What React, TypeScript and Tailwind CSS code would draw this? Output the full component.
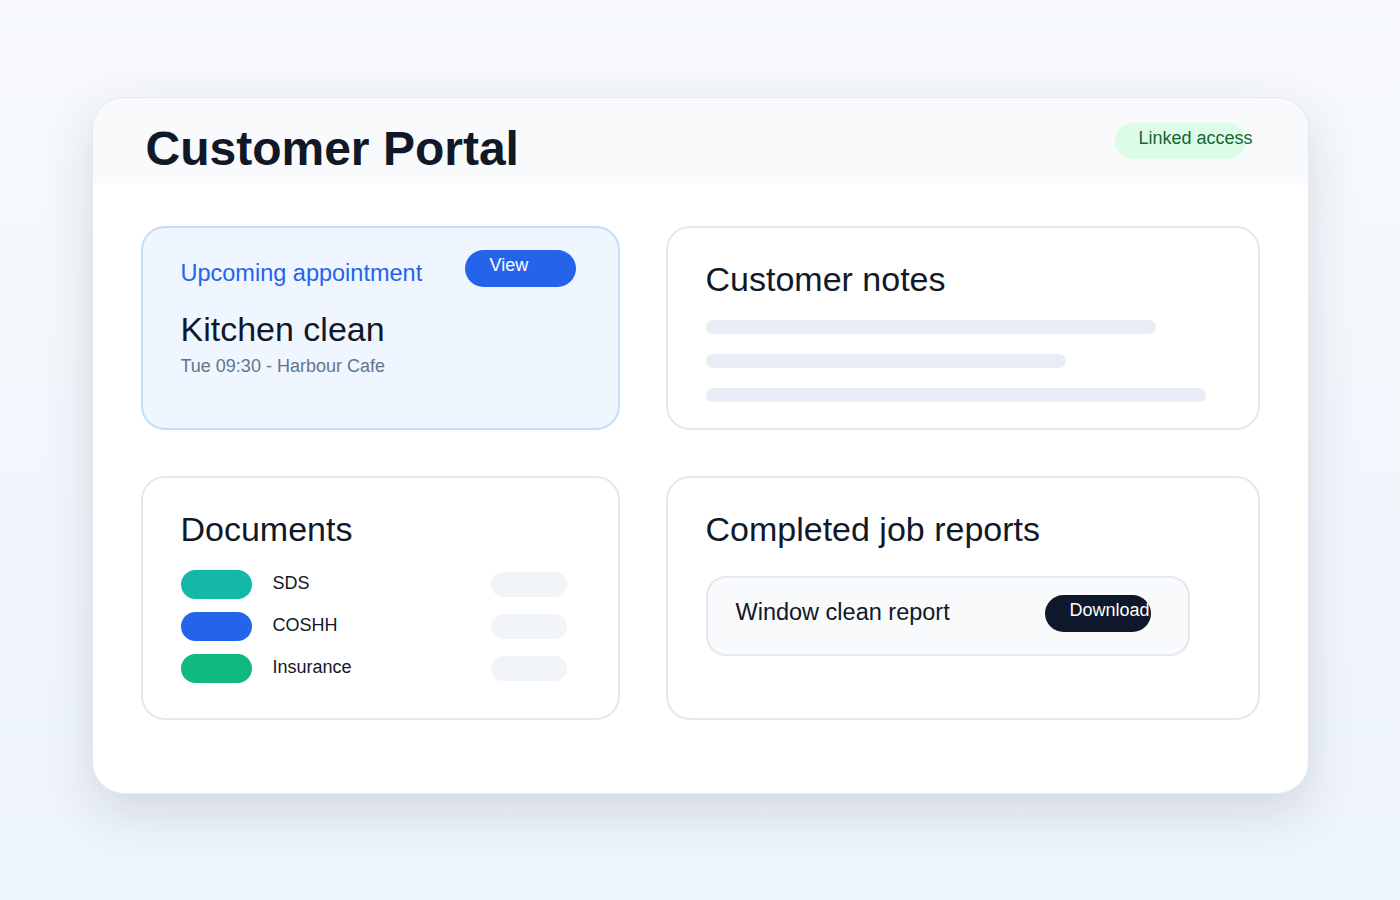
import React from 'react';

const docs = [
  { name: 'SDS', color: 'bg-[#14b8a6]' },
  { name: 'COSHH', color: 'bg-[#2563eb]' },
  { name: 'Insurance', color: 'bg-[#10b981]' },
];

const noteBars = ['w-[450px]', 'w-[360px]', 'w-[500px]'];

export default function App() {
  return (
    <div
      className="min-h-[900px] w-full bg-gradient-to-b from-[#f7f9fc] to-[#eef4fc] pt-[97px]"
      style={{ fontFamily: '"Liberation Sans", Arial, sans-serif' }}
    >
      <div className="mx-auto h-[697px] w-[1217px] overflow-hidden rounded-[32px] border border-[#e3e8ef] bg-white shadow-[0_18px_50px_rgba(30,41,59,0.14)]">
        {/* header band */}
        <div className="flex h-[85px] items-start justify-between bg-[#f8fafc] pl-[53px] pr-[62px]">
          <h1 className="mt-[27px] text-[48px] font-bold leading-[48px] text-[#111827]">Customer Portal</h1>
          <div className="mt-[25px] h-[36px] w-[131px] whitespace-nowrap rounded-full bg-[#dcfce7] pl-[24px] pt-[4px] text-[18px] leading-[22px] text-[#166534]">
            Linked access
          </div>
        </div>

        <div className="grid grid-cols-[479px_594px] gap-[46px] px-[48px] pt-[43px]">
          {/* upcoming appointment */}
          <div className="h-[204px] rounded-[24px] border-2 border-[#c6dcf7] bg-[#eff6ff] px-[38px] pt-[22px]">
            <div className="flex items-start justify-between">
              <div className="mt-[9px] text-[23.5px] leading-[28px] text-[#2563eb]">Upcoming appointment</div>
              <div className="mr-[4px] h-[37px] w-[111px] rounded-full bg-[#2563eb] pl-[25px] pt-[4px] text-[18px] leading-[22px] text-white">
                View
              </div>
            </div>
            <div className="mt-[22px] text-[34px] leading-[40px] text-[#111827]">Kitchen clean</div>
            <div className="mt-[6px] text-[18px] leading-[22px] text-[#64748b]">Tue 09:30 - Harbour Cafe</div>
          </div>

          {/* customer notes */}
          <div className="h-[204px] rounded-[24px] border-2 border-[#e4e8ef] bg-white px-[38px] pt-[31px]">
            <div className="text-[34px] leading-[40px] text-[#111827]">Customer notes</div>
            <div className="mt-[21px] flex flex-col gap-[20px]">
              {noteBars.map((w) => (
                <div key={w} className={`h-[14px] rounded-full bg-[#e8edf5] ${w}`} />
              ))}
            </div>
          </div>

          {/* documents */}
          <div className="h-[244px] rounded-[24px] border-2 border-[#e4e8ef] bg-white px-[38px] pt-[31px]">
            <div className="text-[34px] leading-[40px] text-[#111827]">Documents</div>
            <div className="mt-[21px] flex flex-col gap-[13px]">
              {docs.map((d) => (
                <div key={d.name} className="flex h-[29px] items-center">
                  <div className={`h-[29px] w-[71px] rounded-full ${d.color}`} />
                  <div className="mb-[3px] ml-[21px] w-[218px] text-[18px] leading-[22px] text-[#111827]">{d.name}</div>
                  <div className="h-[25px] w-[76px] rounded-full bg-[#f1f4f8] blur-[0.6px]" />
                </div>
              ))}
            </div>
          </div>

          {/* completed job reports */}
          <div className="h-[244px] rounded-[24px] border-2 border-[#e4e8ef] bg-white px-[38px] pt-[31px]">
            <div className="text-[34px] leading-[40px] text-[#111827]">Completed job reports</div>
            <div className="mt-[27px] flex h-[80px] w-[484px] items-center justify-between rounded-[20px] border-2 border-[#e4e8ef] bg-[#f8fafc] pl-[28px] pr-[37px]">
              <div className="mb-[8px] text-[23.5px] leading-[28px] text-[#111827]">Window clean report</div>
              <div className="-mt-[5px] h-[37px] w-[106px] overflow-hidden whitespace-nowrap rounded-full bg-[#0f172a] pl-[25px] pt-[4px] text-[18px] leading-[22px] text-white">
                Download
              </div>
            </div>
          </div>
        </div>
      </div>
    </div>
  );
}
